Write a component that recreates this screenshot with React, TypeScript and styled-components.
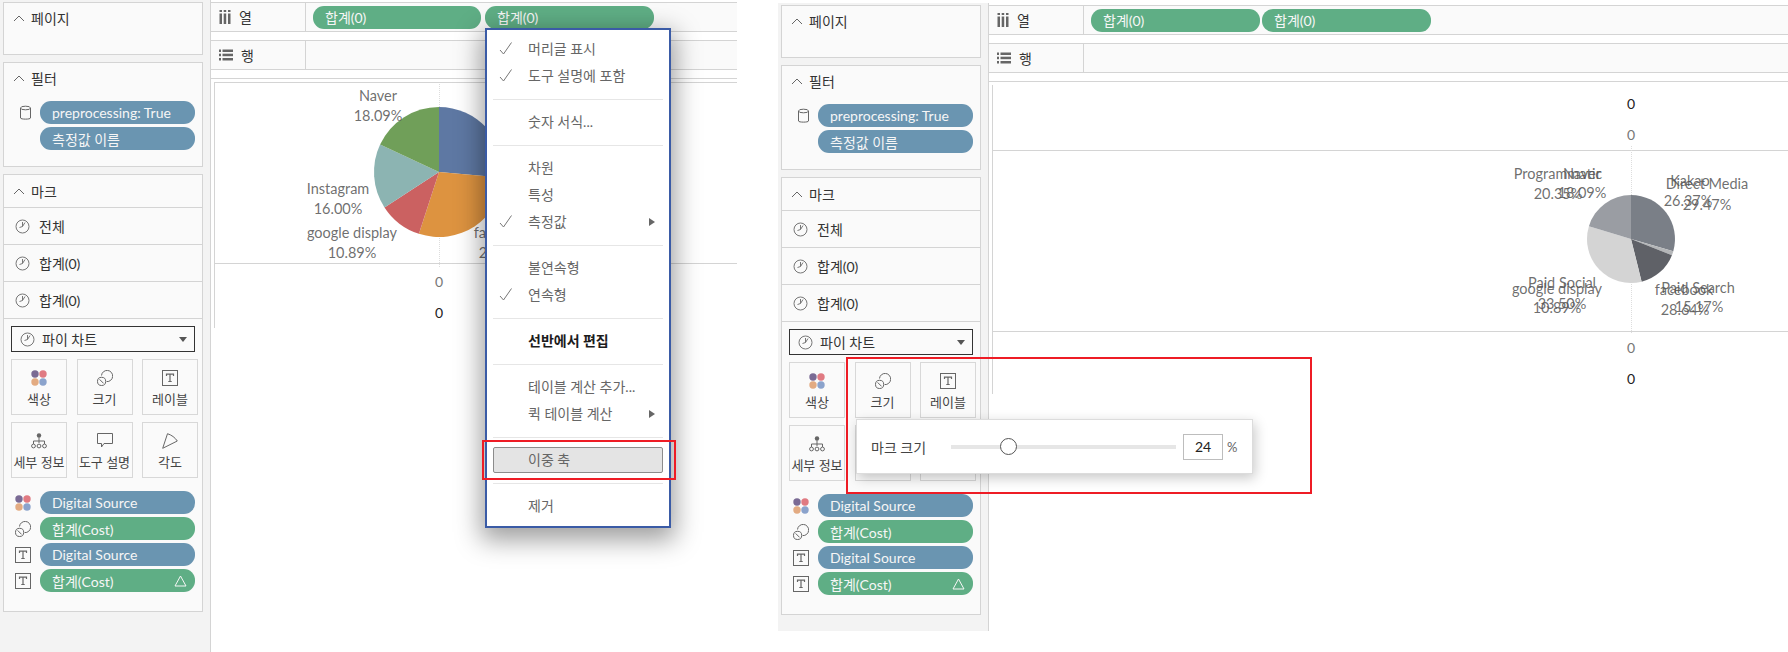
import React from 'react'
import styled, { createGlobalStyle } from 'styled-components'

const FONT = `Lato, "Noto Sans CJK KR", sans-serif`

const GlobalStyle = createGlobalStyle`
  html, body {
    margin: 0;
    padding: 0;
    background: #fff;
  }
  body {
    font-family: ${FONT};
    font-size: 14px;
    color: #444;
  }
  * {
    box-sizing: border-box;
  }
`

const Page = styled.div`
  display: flex;
  align-items: flex-start;
  width: 1788px;
  height: 652px;
  overflow: hidden;
`

const Workspace = styled.div<{ $width: number; $height: number; $top: number }>`
  position: relative;
  display: flex;
  flex: 0 0 ${({ $width }) => $width}px;
  height: ${({ $height }) => $height}px;
  margin-top: ${({ $top }) => $top}px;
`

const Sidebar = styled.aside`
  display: flex;
  flex-direction: column;
  gap: 7px;
  flex: 0 0 211px;
  padding: 2px 7px 0 3px;
  background: #f3f3f3;
  border-right: 1px solid #d4d4d4;
`

const Panel = styled.section<{ $height: number }>`
  height: ${({ $height }) => $height}px;
  background: #fafafa;
  border: 1px solid #d4d4d4;
`

const PanelHeader = styled.div<{ $height?: number; $border?: boolean }>`
  display: flex;
  align-items: center;
  gap: 6px;
  height: ${({ $height }) => $height ?? 30}px;
  padding-left: 9px;
  color: #333;
  border-bottom: ${({ $border }) => ($border ? '1px solid #d4d4d4' : 'none')};
`

const FilterBody = styled.div`
  display: grid;
  grid-template-columns: 36px 155px;
  row-gap: 3px;
  margin-top: 8px;
`

const FilterIcon = styled.div`
  padding: 4px 0 0 15px;
`

const MarkRow = styled.div`
  display: flex;
  align-items: center;
  gap: 9px;
  height: 37px;
  padding-left: 11px;
  color: #333;
  border-bottom: 1px solid #d4d4d4;
`

const MarkControls = styled.div`
  padding: 7px 0 0 7px;
`

const MarkType = styled.div`
  display: flex;
  align-items: center;
  gap: 7px;
  width: 184px;
  height: 26px;
  padding: 0 7px 0 8px;
  color: #333;
  background: #fafafa;
  border: 1px solid #333;
`

const DropArrow = styled.span`
  margin-left: auto;
  border-left: 4px solid transparent;
  border-right: 4px solid transparent;
  border-top: 5px solid #555;
`

const CardGrid = styled.div`
  display: grid;
  grid-template-columns: repeat(3, 56px);
  column-gap: 9.5px;
  row-gap: 7px;
  margin-top: 7px;
`

const Card = styled.div`
  display: flex;
  flex-direction: column;
  align-items: center;
  gap: 4px;
  height: 56px;
  padding-top: 10px;
  font-size: 13px;
  line-height: 18px;
  color: #444;
  white-space: nowrap;
  background: #fafafa;
  border: 1px solid #d8d8d8;
`

const Legend = styled.div`
  display: grid;
  grid-template-columns: 25px 155px;
  align-items: center;
  row-gap: 3px;
  margin-top: 13px;
  padding-left: 4px;
`

const Pill = styled.div<{ $tone: 'green' | 'blue'; $width?: number }>`
  display: flex;
  align-items: center;
  justify-content: space-between;
  width: ${({ $width }) => ($width ? `${$width}px` : '100%')};
  height: 23px;
  padding: 0 8px 0 12px;
  color: #f6f6f6;
  white-space: nowrap;
  background: ${({ $tone }) => ($tone === 'green' ? '#5fae85' : '#6a95b1')};
  border-radius: 11px;
`

const Main = styled.main<{ $rightGap: number }>`
  display: flex;
  flex-direction: column;
  flex: 1;
  min-width: 0;
  padding: 2px ${({ $rightGap }) => $rightGap}px 0 0;
`

const Shelf = styled.div`
  display: flex;
  align-items: center;
  flex: 0 0 30px;
  margin-bottom: 8px;
  background: #fafafa;
  border-top: 1px solid #d4d4d4;
  border-bottom: 1px solid #d4d4d4;
`

const ShelfLabel = styled.div`
  display: flex;
  align-items: center;
  gap: 8px;
  flex: 0 0 95px;
  height: 100%;
  padding-left: 8px;
  color: #333;
  border-right: 1px solid #d4d4d4;
`

const ShelfPills = styled.div<{ $gap: number }>`
  display: flex;
  gap: ${({ $gap }) => $gap}px;
  margin-left: 7px;
`

const View = styled.div`
  flex: 1;
  padding: 3px 0 0 3px;
  background: #fff;
  border-top: 1px solid #d4d4d4;
`

const Frame = styled.div<{ $topLine?: boolean }>`
  border-left: 1px solid #d4d4d4;
  border-top: ${({ $topLine }) => ($topLine ? '1px solid #d4d4d4' : 'none')};
`

const AxisPane = styled.div<{ $pad?: number }>`
  padding-top: ${({ $pad }) => $pad ?? 0}px;
`

const AxisZero = styled.div<{ $x: number; $dark?: boolean }>`
  height: 31px;
  padding-left: ${({ $x }) => $x}px;
  line-height: 31px;
  color: ${({ $dark }) => ($dark ? '#222' : '#777')};
`

const ChartPane = styled.div<{ $height: number; $topLine?: boolean }>`
  height: ${({ $height }) => $height}px;
  border-top: ${({ $topLine }) => ($topLine ? '1px solid #d4d4d4' : 'none')};
  border-bottom: 1px solid #d4d4d4;
`

const ChartSvg = styled.svg`
  display: block;
  width: 100%;
  height: 100%;
  overflow: visible;
`

const ChartText = styled.text`
  font-family: ${FONT};
  font-size: 14.5px;
  fill: #555;
  fill-opacity: 0.85;
  text-anchor: middle;
  dominant-baseline: central;
`

const Menu = styled.div`
  position: absolute;
  left: 485px;
  top: 28px;
  width: 186px;
  height: 500px;
  background: #fff;
  border: 2px solid #3a5ba6;
  box-shadow: 0 8px 24px 4px rgba(0, 0, 0, 0.38);
`

const MenuGroup = styled.div<{ $first?: boolean; $last?: boolean }>`
  padding: ${({ $first }) => ($first ? 5 : 8)}px 0 ${({ $last }) => ($last ? 7 : 10)}px;
  margin: 0 6px;
  border-top: ${({ $first }) => ($first ? 'none' : '1px solid #e6e6e6')};
`

const MenuItem = styled.div<{ $bold?: boolean; $active?: boolean }>`
  position: relative;
  display: flex;
  align-items: center;
  height: ${({ $active }) => ($active ? 26 : 27)}px;
  margin-top: ${({ $active }) => ($active ? 1 : 0)}px;
  padding: 0 0 2px 35px;
  color: ${({ $bold }) => ($bold ? '#1c1c1c' : '#666')};
  font-weight: ${({ $bold }) => ($bold ? 700 : 400)};
  background: ${({ $active }) => ($active ? '#e4e4e4' : 'transparent')};
  border: ${({ $active }) => ($active ? '1px solid #8c8c8c' : 'none')};
  border-radius: ${({ $active }) => ($active ? 2 : 0)}px;
  ${({ $active }) => ($active ? 'padding-left: 34px;' : '')}
`

const CheckMark = styled.svg`
  position: absolute;
  left: 6px;
  top: 7px;
`

const SubArrow = styled.span`
  position: absolute;
  right: 8px;
  top: 10px;
  border-top: 4px solid transparent;
  border-bottom: 4px solid transparent;
  border-left: 6px solid #666;
`

const Highlight = styled.div<{ $left: number; $top: number; $width: number; $height: number }>`
  position: absolute;
  left: ${({ $left }) => $left}px;
  top: ${({ $top }) => $top}px;
  width: ${({ $width }) => $width}px;
  height: ${({ $height }) => $height}px;
  border: 2.5px solid #ee1c25;
  pointer-events: none;
`

const SizePopup = styled.div`
  position: absolute;
  left: 78px;
  top: 416px;
  display: flex;
  align-items: center;
  width: 397px;
  height: 55px;
  padding-left: 14px;
  color: #444;
  background: #fff;
  border: 1px solid #dcdcdc;
  box-shadow: 2px 4px 12px rgba(0, 0, 0, 0.22);
`

const SliderLabel = styled.span`
  flex: 0 0 80px;
`

const SliderTrack = styled.div`
  position: relative;
  flex: 0 0 225px;
  height: 4px;
  background: #e6e6e6;
`

const SliderThumb = styled.div`
  position: absolute;
  top: -7px;
  width: 17px;
  height: 17px;
  background: #fff;
  border: 1px solid #555;
  border-radius: 50%;
`

const SizeInput = styled.div`
  display: flex;
  align-items: center;
  justify-content: center;
  width: 40px;
  height: 26px;
  margin-left: 7px;
  color: #222;
  border: 1px solid #bdbdbd;
`

const Percent = styled.span`
  margin-left: 4px;
  font-size: 13px;
  color: #666;
`

const PieIcon = () => (
  <svg width="15" height="15" viewBox="0 0 15 15" fill="none" stroke="#777" strokeWidth="1">
    <circle cx="7.5" cy="7.5" r="6.5" />
    <path d="M7.5 7.5 L7.5 3 M7.5 7.5 L4.5 8.5 M7.5 7.5 L10 3.5" />
  </svg>
)

const ChevronUp = () => (
  <svg width="12" height="7" viewBox="0 0 12 7" fill="none" stroke="#666" strokeWidth="1">
    <path d="M1 6 L6 1 L11 6" />
  </svg>
)

const DatabaseIcon = () => (
  <svg width="13" height="16" viewBox="0 0 13 16" fill="none" stroke="#666" strokeWidth="1">
    <path d="M1.5 3 V13 C1.5 14.5 11.5 14.5 11.5 13 V3" />
    <ellipse cx="6.5" cy="3" rx="5" ry="1.8" />
  </svg>
)

const ColorIcon = () => (
  <svg width="16" height="16" viewBox="0 0 16 16">
    <circle cx="4" cy="4" r="3.7" fill="#7a6a94" />
    <circle cx="12" cy="4" r="3.7" fill="#e07a82" />
    <circle cx="4" cy="12" r="3.7" fill="#e3ab82" />
    <circle cx="12" cy="12" r="3.7" fill="#8ba3cc" />
  </svg>
)

const SizeIcon = () => (
  <svg width="16" height="16" viewBox="0 0 16 16" fill="none" stroke="#666" strokeWidth="1">
    <circle cx="4.6" cy="11.4" r="4.1" />
    <path d="M2.6 9.4 L6.6 13.4" />
    <path d="M4.5 5.5 A5.6 5.6 0 1 1 9.6 11.6" />
  </svg>
)

const LabelIcon = () => (
  <svg width="16" height="16" viewBox="0 0 16 16" fill="none" stroke="#666">
    <rect x="0.5" y="0.5" width="15" height="15" strokeWidth="1" />
    <path d="M4.5 6 V4.2 H11.5 V6 M8 4.2 V11.5 M6.3 11.5 H9.7" strokeWidth="1.2" />
  </svg>
)

const DetailIcon = () => (
  <svg width="16" height="16" viewBox="0 0 16 16" fill="none" stroke="#666" strokeWidth="1">
    <circle cx="8" cy="2.5" r="2.2" fill="#666" stroke="none" />
    <path d="M8 4.5 V10 M2.5 11 V8 H13.5 V11" />
    <circle cx="2.5" cy="13" r="1.9" />
    <circle cx="8" cy="13" r="1.9" />
    <circle cx="13.5" cy="13" r="1.9" />
  </svg>
)

const TooltipIcon = () => (
  <svg width="16" height="16" viewBox="0 0 16 16" fill="none" stroke="#666" strokeWidth="1">
    <path d="M0.5 0.5 H15.5 V10.5 H7 L4.5 14 V10.5 H0.5 Z" />
  </svg>
)

const AngleIcon = () => (
  <svg width="16" height="16" viewBox="0 0 16 16" fill="none" stroke="#666" strokeWidth="1">
    <path d="M0.7 15.3 L5.5 0.7 C9.5 2 13 4.5 15.3 8 Z" />
  </svg>
)

const ColumnsIcon = () => (
  <svg width="12" height="14" viewBox="0 0 12 14" fill="#666">
    <rect x="0.5" y="0" width="2.5" height="2" />
    <rect x="4.7" y="0" width="2.5" height="2" />
    <rect x="9" y="0" width="2.5" height="2" />
    <rect x="0.5" y="3.5" width="2.5" height="10.5" />
    <rect x="4.7" y="3.5" width="2.5" height="10.5" />
    <rect x="9" y="3.5" width="2.5" height="10.5" />
  </svg>
)

const RowsIcon = () => (
  <svg width="14" height="12" viewBox="0 0 14 12" fill="#666">
    <rect x="0" y="0.5" width="2" height="2.5" />
    <rect x="3.5" y="0.5" width="10.5" height="2.5" />
    <rect x="0" y="4.7" width="2" height="2.5" />
    <rect x="3.5" y="4.7" width="10.5" height="2.5" />
    <rect x="0" y="9" width="2" height="2.5" />
    <rect x="3.5" y="9" width="10.5" height="2.5" />
  </svg>
)

const DeltaIcon = () => (
  <svg width="13" height="12" viewBox="0 0 13 12" fill="none" stroke="#f6f6f6" strokeWidth="1">
    <path d="M6.5 1 L12 11 H1 Z" />
  </svg>
)

const Check = () => (
  <CheckMark width="14" height="13" viewBox="0 0 14 13" fill="none" stroke="#777" strokeWidth="1">
    <path d="M1 8 L4.5 12 L12.5 0.5" />
  </CheckMark>
)

interface Slice {
  end: number
  color: string
}

interface ChartLabel {
  x: number
  y: number
  text: string
}

interface PieProps {
  originX: number
  originY: number
  cx: number
  cy: number
  r: number
  axisTop: number
  axisBottom: number
  slices: Slice[]
  labels: ChartLabel[]
}

const slicePath = (cx: number, cy: number, r: number, from: number, to: number) => {
  const point = (deg: number) => {
    const rad = ((deg - 90) * Math.PI) / 180
    return `${cx + r * Math.cos(rad)} ${cy + r * Math.sin(rad)}`
  }
  return `M${cx} ${cy} L${point(from)} A${r} ${r} 0 ${to - from > 180 ? 1 : 0} 1 ${point(to)} Z`
}

// data below is in page pixels, the group shifts it into the pane
const PieChart = ({ originX, originY, cx, cy, r, axisTop, axisBottom, slices, labels }: PieProps) => (
  <ChartSvg>
    <g transform={`translate(${-originX} ${-originY})`}>
      <line x1={cx + 0.5} x2={cx + 0.5} y1={axisTop} y2={axisBottom} stroke="#ddd" strokeDasharray="1 1" />
      {slices.map((slice, i) => (
        <path
          key={slice.color}
          d={slicePath(cx, cy, r, i === 0 ? 0 : slices[i - 1].end, slice.end)}
          fill={slice.color}
        />
      ))}
      {labels.map((label) => (
        <ChartText key={`${label.text}-${label.x}`} x={label.x} y={label.y}>
          {label.text}
        </ChartText>
      ))}
    </g>
  </ChartSvg>
)

const leftSlices: Slice[] = [
  { end: 95, color: '#5e78a3' },
  { end: 198, color: '#dd9340' },
  { end: 237, color: '#cb6161' },
  { end: 295, color: '#8cb4b2' },
  { end: 360, color: '#709f59' },
]

const rightSlices: Slice[] = [
  { end: 106, color: '#7a7f87' },
  { end: 111.5, color: '#b4b6b8' },
  { end: 166, color: '#5f6167' },
  { end: 287, color: '#d4d4d4' },
  { end: 360, color: '#9a9da3' },
]

const leftLabels: ChartLabel[] = [
  { x: 378, y: 95, text: 'Naver' },
  { x: 378, y: 115, text: '18.09%' },
  { x: 338, y: 188, text: 'Instagram' },
  { x: 338, y: 208, text: '16.00%' },
  { x: 352, y: 232, text: 'google display' },
  { x: 352, y: 252, text: '10.89%' },
  { x: 503, y: 232, text: 'facebook' },
  { x: 503, y: 252, text: '28.64%' },
]

const rightLabels: ChartLabel[] = [
  { x: 1558, y: 173, text: 'Programmatic' },
  { x: 1558, y: 193, text: '20.35%' },
  { x: 1582, y: 173, text: 'Naver' },
  { x: 1582, y: 192, text: '18.09%' },
  { x: 1690, y: 180, text: 'Kakao' },
  { x: 1688, y: 200, text: '26.37%' },
  { x: 1707, y: 183, text: 'Direct Media' },
  { x: 1707, y: 204, text: '29.47%' },
  { x: 1562, y: 282, text: 'Paid Social' },
  { x: 1562, y: 303, text: '33.50%' },
  { x: 1557, y: 288, text: 'google display' },
  { x: 1557, y: 307, text: '10.89%' },
  { x: 1684, y: 289, text: 'facebook' },
  { x: 1685, y: 309, text: '28.64%' },
  { x: 1698, y: 287, text: 'Paid Search' },
  { x: 1699, y: 306, text: '15.17%' },
]

const SidebarContent = () => (
  <Sidebar>
    <Panel $height={53}>
      <PanelHeader>
        <ChevronUp />
        페이지
      </PanelHeader>
    </Panel>
    <Panel $height={105}>
      <PanelHeader>
        <ChevronUp />
        필터
      </PanelHeader>
      <FilterBody>
        <FilterIcon>
          <DatabaseIcon />
        </FilterIcon>
        <Pill $tone="blue">preprocessing: True</Pill>
        <span />
        <Pill $tone="blue">측정값 이름</Pill>
      </FilterBody>
    </Panel>
    <Panel $height={438}>
      <PanelHeader $height={33} $border>
        <ChevronUp />
        마크
      </PanelHeader>
      {['전체', '합계(0)', '합계(0)'].map((name, i) => (
        <MarkRow key={i}>
          <PieIcon />
          {name}
        </MarkRow>
      ))}
      <MarkControls>
        <MarkType>
          <PieIcon />
          파이 차트
          <DropArrow />
        </MarkType>
        <CardGrid>
          <Card>
            <ColorIcon />
            색상
          </Card>
          <Card>
            <SizeIcon />
            크기
          </Card>
          <Card>
            <LabelIcon />
            레이블
          </Card>
          <Card>
            <DetailIcon />
            세부 정보
          </Card>
          <Card>
            <TooltipIcon />
            도구 설명
          </Card>
          <Card>
            <AngleIcon />
            각도
          </Card>
        </CardGrid>
        <Legend>
          <ColorIcon />
          <Pill $tone="blue">Digital Source</Pill>
          <SizeIcon />
          <Pill $tone="green">합계(Cost)</Pill>
          <LabelIcon />
          <Pill $tone="blue">Digital Source</Pill>
          <LabelIcon />
          <Pill $tone="green">
            합계(Cost)
            <DeltaIcon />
          </Pill>
        </Legend>
      </MarkControls>
    </Panel>
  </Sidebar>
)

const Shelves = ({ gap, first, second }: { gap: number; first: number; second: number }) => (
  <>
    <Shelf>
      <ShelfLabel>
        <ColumnsIcon />열
      </ShelfLabel>
      <ShelfPills $gap={gap}>
        <Pill $tone="green" $width={first}>
          합계(0)
        </Pill>
        <Pill $tone="green" $width={second}>
          합계(0)
        </Pill>
      </ShelfPills>
    </Shelf>
    <Shelf>
      <ShelfLabel>
        <RowsIcon />행
      </ShelfLabel>
    </Shelf>
  </>
)

const FieldMenu = () => (
  <Menu>
    <MenuGroup $first>
      <MenuItem>
        <Check />
        머리글 표시
      </MenuItem>
      <MenuItem>
        <Check />
        도구 설명에 포함
      </MenuItem>
    </MenuGroup>
    <MenuGroup>
      <MenuItem>숫자 서식...</MenuItem>
    </MenuGroup>
    <MenuGroup>
      <MenuItem>차원</MenuItem>
      <MenuItem>특성</MenuItem>
      <MenuItem>
        <Check />
        측정값
        <SubArrow />
      </MenuItem>
    </MenuGroup>
    <MenuGroup>
      <MenuItem>불연속형</MenuItem>
      <MenuItem>
        <Check />
        연속형
      </MenuItem>
    </MenuGroup>
    <MenuGroup>
      <MenuItem $bold>선반에서 편집</MenuItem>
    </MenuGroup>
    <MenuGroup>
      <MenuItem>테이블 계산 추가...</MenuItem>
      <MenuItem>
        퀵 테이블 계산
        <SubArrow />
      </MenuItem>
    </MenuGroup>
    <MenuGroup>
      <MenuItem $active>이중 축</MenuItem>
    </MenuGroup>
    <MenuGroup $last>
      <MenuItem>제거</MenuItem>
    </MenuGroup>
  </Menu>
)

const App = () => (
  <Page>
    <GlobalStyle />
    <Workspace $width={778} $height={652} $top={0}>
      <SidebarContent />
      <Main $rightGap={41}>
        <Shelves gap={4} first={168} second={169} />
        <View>
          <Frame $topLine>
            <ChartPane $height={181}>
              <PieChart
                originX={215}
                originY={83}
                cx={439}
                cy={172}
                r={65}
                axisTop={84}
                axisBottom={267}
                slices={leftSlices}
                labels={leftLabels}
              />
            </ChartPane>
            <AxisPane $pad={2}>
              <AxisZero $x={220}>0</AxisZero>
              <AxisZero $x={220} $dark>
                0
              </AxisZero>
            </AxisPane>
          </Frame>
        </View>
      </Main>
      <FieldMenu />
      <Highlight $left={482} $top={440} $width={194} $height={40} />
    </Workspace>
    <Workspace $width={1010} $height={628} $top={3}>
      <SidebarContent />
      <Main $rightGap={0}>
        <Shelves gap={2} first={169} second={169} />
        <View>
          <Frame>
            <AxisPane $pad={3}>
              <AxisZero $x={634} $dark>
                0
              </AxisZero>
              <AxisZero $x={634}>0</AxisZero>
            </AxisPane>
            <ChartPane $height={182} $topLine>
              <PieChart
                originX={993}
                originY={151}
                cx={1631}
                cy={239}
                r={44}
                axisTop={146}
                axisBottom={334}
                slices={rightSlices}
                labels={rightLabels}
              />
            </ChartPane>
            <AxisPane>
              <AxisZero $x={634}>0</AxisZero>
              <AxisZero $x={634} $dark>
                0
              </AxisZero>
            </AxisPane>
          </Frame>
        </View>
      </Main>
      <Highlight $left={68} $top={354} $width={466} $height={137} />
      <SizePopup>
        <SliderLabel>마크 크기</SliderLabel>
        <SliderTrack>
          <SliderThumb style={{ left: `${(58 / 225) * 100 - 4}%` }} />
        </SliderTrack>
        <SizeInput>24</SizeInput>
        <Percent>%</Percent>
      </SizePopup>
    </Workspace>
  </Page>
)

export default App
